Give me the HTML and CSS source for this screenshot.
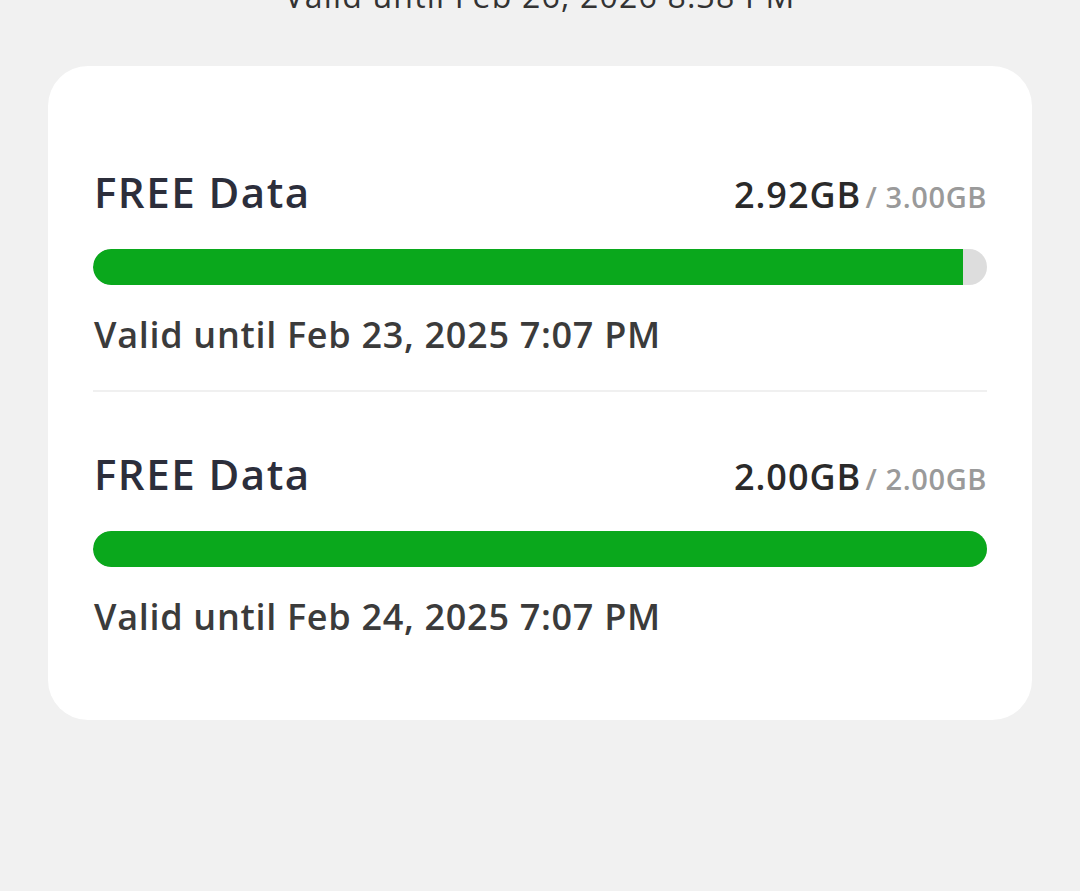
FILE: index.html
```html
<!DOCTYPE html>
<html lang="en">
<head>
  <meta charset="UTF-8">
  <title>Data Balance</title>
  <link rel="stylesheet" href="styles.css">
</head>
<body>

  <div class="prev-valid">Valid until Feb 26, 2026 8:38 PM</div>

  <div class="card">
    <div class="item">
      <div class="item-head">
        <span class="item-name">FREE Data</span>
        <span class="item-amount"><b>2.92GB</b> <span class="total">/ 3.00GB</span></span>
      </div>
      <div class="bar"><div class="bar-fill" style="width: 97.3%"></div></div>
      <div class="item-valid">Valid until Feb 23, 2025 7:07 PM</div>
    </div>

    <div class="divider"></div>

    <div class="item">
      <div class="item-head">
        <span class="item-name">FREE Data</span>
        <span class="item-amount"><b>2.00GB</b> <span class="total">/ 2.00GB</span></span>
      </div>
      <div class="bar"><div class="bar-fill" style="width: 100%"></div></div>
      <div class="item-valid">Valid until Feb 24, 2025 7:07 PM</div>
    </div>
  </div>

</body>
</html>
```

FILE: styles.css
```css
body {
  margin: 0;
  background: #f1f1f1;
  font-family: "Open Sans", "Noto Sans", sans-serif;
  overflow: hidden;
}
.prev-valid {
  margin-top: -24px;
  text-align: center;
  font-size: 32px;
  line-height: 40px;
  font-weight: 500;
  letter-spacing: 1.2px;
  color: #333;
}
.card {
  margin: 50px 48px 0;
  background: #fff;
  border-radius: 40px;
  padding: 101px 45px 81px;
}
.item-head {
  display: flex;
  justify-content: space-between;
  align-items: baseline;
  height: 50px;
  line-height: 50px;
  padding: 0 0 0 1px;
}
.item-name {
  font-size: 42px;
  font-weight: 600;
  letter-spacing: 1.5px;
  color: #2c2e3b;
}
.item-amount {
  line-height: 46px;
  margin-top: -4px;
}
.item-amount b {
  font-size: 36px;
  font-weight: 600;
  letter-spacing: 1px;
  color: #2a2a2a;
}
.item-amount .total {
  font-size: 29px;
  font-weight: 600;
  letter-spacing: 0.6px;
  color: #9a9a9a;
}
.bar {
  margin-top: 32px;
  height: 36px;
  border-radius: 18px;
  background: #dddddd;
  overflow: hidden;
}
.bar-fill {
  height: 100%;
  background: #0aa81c;
  border-radius: 18px 0 0 18px;
}
.item-valid {
  margin-top: 28px;
  padding-left: 1px;
  font-size: 36px;
  line-height: 44px;
  font-weight: 600;
  letter-spacing: 0.7px;
  color: #3b3b3b;
}
.divider {
  height: 2px;
  background: #f0f0f0;
  margin: 33px 0 57px;
}
```
